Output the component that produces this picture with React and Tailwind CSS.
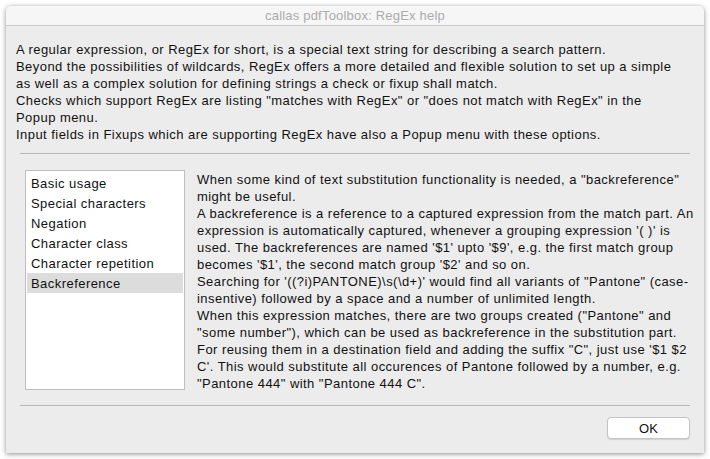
import { useState } from "react";

const topics = [
  "Basic usage",
  "Special characters",
  "Negation",
  "Character class",
  "Character repetition",
  "Backreference",
];

const intro = [
  "A regular expression, or RegEx for short, is a special text string for describing a search pattern.",
  "Beyond the possibilities of wildcards, RegEx offers a more detailed and flexible solution to set up a simple",
  "as well as a complex solution for defining strings a check or fixup shall match.",
  'Checks which support RegEx are listing "matches with RegEx" or "does not match with RegEx" in the',
  "Popup menu.",
  "Input fields in Fixups which are supporting RegEx have also a Popup menu with these options.",
];

const details = [
  'When some kind of text substitution functionality is needed, a "backreference"',
  "might be useful.",
  "A backreference is a reference to a captured expression from the match part. An",
  "expression is automatically captured, whenever a grouping expression '( )' is",
  "used. The backreferences are named '$1' upto '$9', e.g. the first match group",
  "becomes '$1', the second match group '$2' and so on.",
  "Searching for '((?i)PANTONE)\\s(\\d+)' would find all variants of \"Pantone\" (case-",
  "insentive) followed by a space and a number of unlimited length.",
  'When this expression matches, there are two groups created ("Pantone" and',
  '"some number"), which can be used as backreference in the substitution part.',
  "For reusing them in a destination field and adding the suffix \"C\", just use '$1 $2",
  "C'. This would substitute all occurences of Pantone followed by a number, e.g.",
  '"Pantone 444" with "Pantone 444 C".',
];

export default function App() {
  const [selected, setSelected] = useState("Backreference");

  return (
    <div
      className="w-[710px] h-[459px] bg-white p-[6px] text-[13px] leading-[17px] tracking-[0.45px] text-[#111]"
      style={{ fontFamily: "'Liberation Sans', Arial, sans-serif" }}
    >
      <div className="w-[698px] h-[447px] flex flex-col bg-[#ececec] rounded-t-[5px] shadow-[0_1px_5px_rgba(0,0,0,0.45)] overflow-hidden">
        {/* Title bar */}
        <div className="h-[20px] shrink-0 bg-[#f6f6f6] border-b border-[#cacaca] flex items-center justify-center text-[#ababab] tracking-[0.2px]">
          callas pdfToolbox: RegEx help
        </div>

        {/* Intro text */}
        <div className="px-[10px] pt-[15px] whitespace-nowrap">
          {intro.map((l, i) => (
            <div key={i}>{l}</div>
          ))}
        </div>

        <div className="mx-[14px] mt-[10px] h-px bg-[#b8b8b8]" />

        {/* Topic list + details */}
        <div className="flex pl-[19px] pt-[16px] gap-[12px]">
          <div className="w-[160px] h-[220px] shrink-0 bg-white border border-[#bfbfbf] pt-[2px] px-[1px]">
            {topics.map((t) => (
              <div
                key={t}
                onClick={() => setSelected(t)}
                className={`h-[20px] px-[4px] flex items-center ${
                  selected === t ? "bg-[#dcdcdc]" : ""
                }`}
              >
                {t}
              </div>
            ))}
          </div>
          <div className="pt-px whitespace-nowrap">
            {details.map((l, i) => (
              <div key={i}>{l}</div>
            ))}
          </div>
        </div>

        <div className="mx-[14px] mt-[13px] h-px bg-[#b8b8b8]" />

        <div className="flex justify-end pr-[14px] pt-[11px]">
          <button className="w-[83px] h-[22px] bg-white border border-[#c4c4c4] rounded-[4px] shadow-[0_1px_1px_rgba(0,0,0,0.12)] text-[13px] tracking-normal">
            OK
          </button>
        </div>
      </div>
    </div>
  );
}
